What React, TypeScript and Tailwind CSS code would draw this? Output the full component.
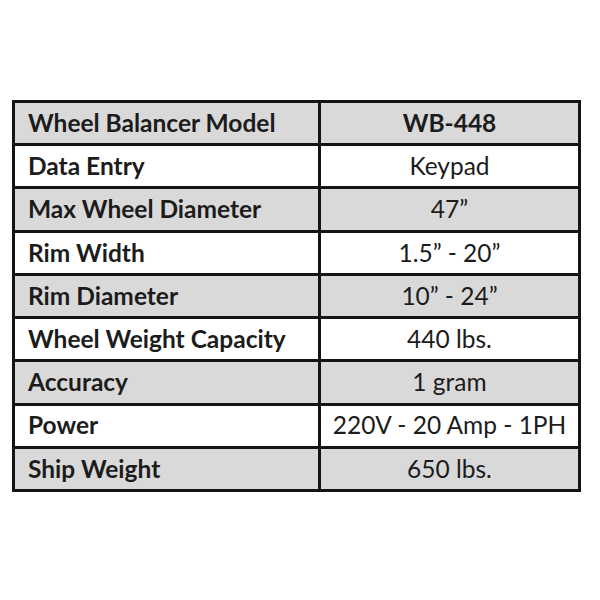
const rows: [string, string][] = [
  ["Wheel Balancer Model", "WB-448"],
  ["Data Entry", "Keypad"],
  ["Max Wheel Diameter", "47\u201D"],
  ["Rim Width", "1.5\u201D - 20\u201D"],
  ["Rim Diameter", "10\u201D - 24\u201D"],
  ["Wheel Weight Capacity", "440 lbs."],
  ["Accuracy", "1 gram"],
  ["Power", "220V - 20 Amp - 1PH"],
  ["Ship Weight", "650 lbs."],
];

export default function App() {
  return (
    <div className="min-h-[600px] w-[600px] bg-white pl-[12px] pt-[100px]">
      <div
        className="grid h-[392px] w-[569px] grid-cols-[303px_1fr] grid-rows-[repeat(9,1fr)] gap-[3px] bg-[#141414] p-[3px] text-[24.5px] leading-none text-[#1c1c1c]"
        style={{ fontFamily: "Lato, 'Open Sans', sans-serif" }}
      >
        {rows.map(([label, value], i) => {
          const shaded = i % 2 === 0;
          const bg = shaded ? "bg-[#d9d9d9]" : "bg-white";
          return [
            <div
              key={label}
              className={`flex items-center pl-[13px] font-bold ${bg}`}
            >
              {label}
            </div>,
            <div
              key={label + "-v"}
              className={`flex items-center justify-center ${bg} ${
                i === 0 ? "font-bold" : ""
              }`}
            >
              {value}
            </div>,
          ];
        })}
      </div>
    </div>
  );
}
